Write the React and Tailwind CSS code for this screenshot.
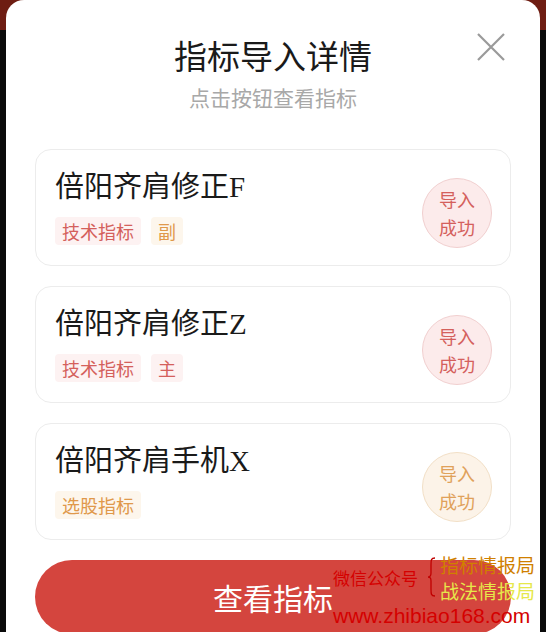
import React from "react"

const cjk = { fontFamily: '"Noto Sans CJK SC", "Noto Sans", sans-serif' }

const items = [
  { name: "倍阳齐肩修正", letter: "F", tags: [{ text: "技术指标", tone: "red" }, { text: "副", tone: "orange" }], tone: "red" },
  { name: "倍阳齐肩修正", letter: "Z", tags: [{ text: "技术指标", tone: "red" }, { text: "主", tone: "red" }], tone: "red" },
  { name: "倍阳齐肩手机", letter: "X", tags: [{ text: "选股指标", tone: "orange" }], tone: "orange" },
]

const tagTone = {
  red: "bg-[#fdf2f2] text-[#d4605c]",
  orange: "bg-[#fdf6ec] text-[#e0984a]",
}

const badgeTone = {
  red: "bg-[#fcebeb] border-[#f1cfcf] text-[#d4605c]",
  orange: "bg-[#fcf3e8] border-[#f2dfc6] text-[#e0a15a]",
}

function Card({ item }) {
  return (
    <div className="flex h-[117px] justify-between rounded-[16px] border border-[#ececec] bg-white pl-[19px] pr-[18px] pt-[16px]">
      <div className="flex flex-col">
        <div className="text-[29px] leading-[36px] text-[#1a1a1a]">
          {item.name}
          <span style={{ fontFamily: '"Liberation Serif", serif' }}>{item.letter}</span>
        </div>
        <div className="mt-[12px] flex gap-[10px]">
          {item.tags.map((t, i) => (
            <span key={i} className={"flex h-[28px] items-center rounded-[4px] px-[7px] text-[18px] " + tagTone[t.tone]}>
              {t.text}
            </span>
          ))}
        </div>
      </div>
      <div className={"mt-[12px] flex h-[70px] w-[70px] flex-col items-center justify-center rounded-full border text-[18px] leading-[28px] " + badgeTone[item.tone]}>
        <span>导入</span>
        <span>成功</span>
      </div>
    </div>
  )
}

export default function App() {
  return (
    <div className="relative h-[632px] w-[546px] overflow-hidden bg-[#0b0b0b]" style={cjk}>
      <div className="absolute left-0 top-0 h-[30px] w-full bg-[#6e1d12]" />
      <div className="relative mx-[6px] h-[640px] rounded-t-[18px] bg-white px-[29px] pt-[34px]">
        <svg className="absolute right-[34px] top-[32px]" width="30" height="30" viewBox="0 0 30 30">
          <path d="M2 2 L28 28 M28 2 L2 28" stroke="#9a9a9a" strokeWidth="2.2" fill="none" />
        </svg>
        <div className="text-center text-[33px] leading-[42px] text-[#1a1a1a]">指标导入详情</div>
        <div className="mt-[9px] text-center text-[21px] leading-[24px] text-[#a8a8a8]">点击按钮查看指标</div>
        <div className="mt-[40px] flex flex-col gap-[20px]">
          {items.map((it, i) => (
            <Card key={i} item={it} />
          ))}
        </div>
        <button className="mt-[20px] flex h-[74px] w-full items-center justify-center rounded-full bg-[#d4453e] text-[30px] text-white">
          查看指标
        </button>
      </div>

      <div className="absolute left-[333px] top-[567px] text-[17px] leading-[22px] text-[#d40000]">微信公众号</div>
      <svg className="absolute left-[427px] top-[557px]" width="10" height="40" viewBox="0 0 10 40">
        <path d="M8 1 C4 1 4 3 4 8 L4 16 C4 19 3 20 1 20 C3 20 4 21 4 24 L4 32 C4 37 4 39 8 39" stroke="#c00000" strokeWidth="1.3" fill="none" />
      </svg>
      <div className="absolute left-[440px] top-[554px] text-[19px] leading-[22px] text-[#d08000]">指标情报局</div>
      <div className="absolute left-[440px] top-[580px] text-[19px] leading-[22px] text-[#e6e84a]">战法情报局</div>
      <div className="absolute left-[333px] top-[604px] text-[21px] leading-[24px] text-[#d40000]" style={{ fontFamily: '"Liberation Sans", sans-serif' }}>
        www.zhibiao168.com
      </div>
    </div>
  )
}
